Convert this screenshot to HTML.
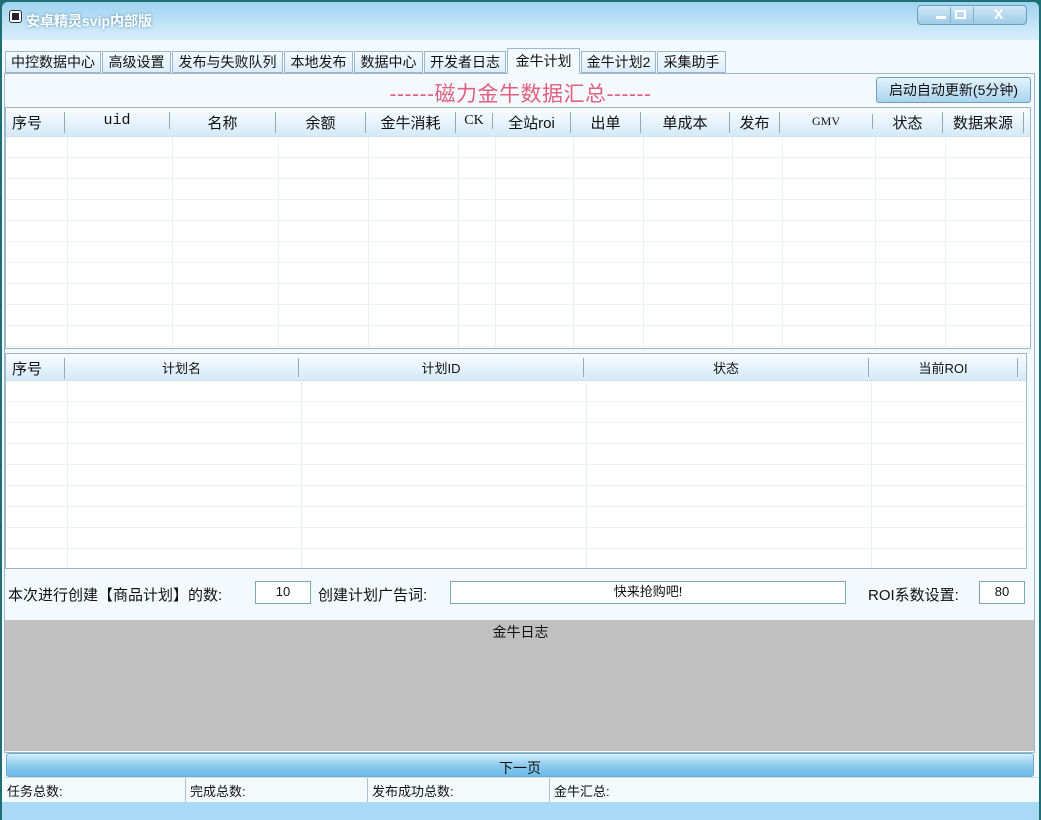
<!DOCTYPE html>
<html><head><meta charset="utf-8"><style>
*{margin:0;padding:0;box-sizing:border-box}
body{width:1041px;height:820px;overflow:hidden;background:#1d6f74;font-family:"Liberation Sans","Noto Sans CJK SC",sans-serif;font-size:14px;color:#111;position:relative}
.a{position:absolute}
#win{left:2px;top:2px;width:1037px;height:818px;background:#eaf4fb;border-radius:6px 6px 0 0;overflow:hidden}
#title{left:0;top:0;width:1037px;height:38px;background:linear-gradient(#9fd2f0,#c3e4f7 60%,#d6eefb)}
#body{left:0;top:38px;width:1037px;height:780px;background:#f3f9fd}
.tab{position:absolute;top:49px;height:22px;border:1px solid #9bb8cc;background:linear-gradient(#f4fbff,#dcedf8);font-size:14px;line-height:20px;text-align:center}
.tbl{position:absolute;background:#fff;border:1px solid #9db6c8;overflow:hidden}
.hd{position:absolute;left:0;top:0;right:0;background:linear-gradient(#fafdff,#d4e9f7);border-bottom:1px solid #cfe0ec}
.hc{position:absolute;top:0;text-align:center;border-right:1px solid #9aa;font-size:15px}
.rows{position:absolute;left:0;right:0;background:repeating-linear-gradient(#fff 0,#fff 20px,#eef2f4 20px,#eef2f4 21px)}
.vl{position:absolute;width:1px;background:#eceff1}
.inp{position:absolute;background:#fff;border:1px solid #7ea4bd;text-align:center;font-size:13px;line-height:20px}
</style></head><body>
<div id="win" class="a">
<div id="title" class="a"></div>
<div class="a" style="left:8px;top:9px;width:11px;height:11px;background:#223;border-radius:2px;border:2px solid #fff;box-shadow:0 0 0 1px #333"></div>
<div class="a" style="left:24px;top:9px;color:#fff;font-size:14px;font-weight:bold;text-shadow:0 0 3px #5a8fb0">安卓精灵svip内部版</div>
<div class="a" style="left:915px;top:3px;width:110px;height:20px;border:1px solid #6a9fbf;border-radius:4px;background:linear-gradient(#cfe8f7,#9ecbe6)"></div>
<div class="a" style="left:934px;top:14px;width:10px;height:3px;background:#fff"></div>
<div class="a" style="left:948px;top:5px;width:1px;height:16px;background:#7fb0cf"></div>
<div class="a" style="left:953px;top:8px;width:11px;height:9px;border:2px solid #fff"></div>
<div class="a" style="left:971px;top:5px;width:1px;height:16px;background:#7fb0cf"></div>
<div class="a" style="left:992px;top:4px;color:#fff;font-weight:bold;font-size:14px">X</div>
<div id="body" class="a"></div>

<div class="tab" style="left:3px;width:96px">中控数据中心</div>
<div class="tab" style="left:100px;width:69px">高级设置</div>
<div class="tab" style="left:170px;width:111px">发布与失败队列</div>
<div class="tab" style="left:282px;width:69px">本地发布</div>
<div class="tab" style="left:352px;width:69px">数据中心</div>
<div class="tab" style="left:422px;width:82px">开发者日志</div>
<div class="tab" style="left:505px;width:73px;top:46px;height:26px;background:#f3f9fd;border-bottom:none;line-height:24px">金牛计划</div>
<div class="tab" style="left:579px;width:75px">金牛计划2</div>
<div class="tab" style="left:655px;width:69px">采集助手</div>
<div class="a" style="left:2px;top:71px;width:1031px;height:680px;border:1px solid #9bb8cc"></div>
<div class="a" style="left:506px;top:70px;width:71px;height:3px;background:#f3f9fd"></div>

<div class="a" style="left:0;top:76px;width:1037px;text-align:center;color:#e0607e;font-size:21px;letter-spacing:0.5px">------磁力金牛数据汇总------</div>
<div class="a" style="left:874px;top:75px;width:155px;height:26px;border:1px solid #6f9fbe;border-radius:3px;background:linear-gradient(#e4f3fc,#a9d3ee);text-align:center;line-height:24px;font-size:14px">启动自动更新(5分钟)</div>

<div class="tbl" style="left:3px;top:105px;width:1026px;height:242px">
 <div class="rows" style="top:29px;bottom:0"></div>
 <div class="hd" style="height:29px"></div>
 <div class="hc" style="left:0;width:59px;top:4px;text-align:left;padding-left:6px">序号</div>
 <div class="hc" style="left:59px;width:105px;top:4px;font-family:'Liberation Mono',monospace">uid</div>
 <div class="hc" style="left:164px;width:106px;top:4px">名称</div>
 <div class="hc" style="left:270px;width:90px;top:4px">余额</div>
 <div class="hc" style="left:360px;width:90px;top:4px">金牛消耗</div>
 <div class="hc" style="left:450px;width:37px;top:5px;font-size:14px;font-family:'Liberation Serif',serif">CK</div>
 <div class="hc" style="left:487px;width:78px;top:4px">全站roi</div>
 <div class="hc" style="left:565px;width:70px;top:4px">出单</div>
 <div class="hc" style="left:635px;width:89px;top:4px">单成本</div>
 <div class="hc" style="left:724px;width:50px;top:4px">发布</div>
 <div class="hc" style="left:774px;width:93px;top:6px;font-size:12px;font-family:'Liberation Serif',serif">GMV</div>
 <div class="hc" style="left:867px;width:70px;top:4px">状态</div>
 <div class="hc" style="left:937px;width:81px;top:4px">数据来源</div>
 <div class="vl" style="left:61px;top:29px;bottom:0"></div><div class="vl" style="left:166px;top:29px;bottom:0"></div><div class="vl" style="left:272px;top:29px;bottom:0"></div><div class="vl" style="left:362px;top:29px;bottom:0"></div><div class="vl" style="left:452px;top:29px;bottom:0"></div><div class="vl" style="left:489px;top:29px;bottom:0"></div><div class="vl" style="left:567px;top:29px;bottom:0"></div><div class="vl" style="left:637px;top:29px;bottom:0"></div><div class="vl" style="left:726px;top:29px;bottom:0"></div><div class="vl" style="left:776px;top:29px;bottom:0"></div><div class="vl" style="left:869px;top:29px;bottom:0"></div><div class="vl" style="left:939px;top:29px;bottom:0"></div>
</div>

<div class="tbl" style="left:3px;top:351px;width:1022px;height:216px">
 <div class="rows" style="top:27px;bottom:0"></div>
 <div class="hd" style="height:27px"></div>
 <div class="hc" style="left:0;width:59px;top:4px;text-align:left;padding-left:6px">序号</div>
 <div class="hc" style="left:59px;width:234px;top:4px;font-size:13px">计划名</div>
 <div class="hc" style="left:293px;width:285px;top:4px;font-size:13px">计划ID</div>
 <div class="hc" style="left:578px;width:285px;top:4px;font-size:13px">状态</div>
 <div class="hc" style="left:863px;width:149px;top:4px;font-size:13px">当前ROI</div>
 <div class="vl" style="left:61px;top:27px;bottom:0"></div><div class="vl" style="left:295px;top:27px;bottom:0"></div><div class="vl" style="left:580px;top:27px;bottom:0"></div><div class="vl" style="left:865px;top:27px;bottom:0"></div>
</div>

<div class="a" style="left:6px;top:582px;font-size:15px">本次进行创建【商品计划】的数:</div>
<div class="inp" style="left:253px;top:579px;width:56px;height:23px">10</div>
<div class="a" style="left:316px;top:582px;font-size:15px">创建计划广告词:</div>
<div class="inp" style="left:448px;top:579px;width:396px;height:23px">快来抢购吧!</div>
<div class="a" style="left:866px;top:582px;font-size:15px">ROI系数设置:</div>
<div class="inp" style="left:977px;top:579px;width:46px;height:23px">80</div>

<div class="a" style="left:3px;top:618px;width:1029px;height:131px;background:#c0c0c0"></div>
<div class="a" style="left:0;top:620px;width:1037px;text-align:center;font-size:14px">金牛日志</div>

<div class="a" style="left:4px;top:751px;width:1028px;height:24px;border:1px solid #6fa9cf;border-radius:3px;background:linear-gradient(#d6effc,#8fccef 50%,#6bbbe8);text-align:center;line-height:28px;font-size:14px">下一页</div>

<div class="a" style="left:2px;top:775px;width:1035px;height:25px;background:#f4f9fc;border-top:1px solid #cfdfe9"></div>
<div class="a" style="left:183px;top:776px;width:1px;height:24px;background:#a9c3d4"></div>
<div class="a" style="left:365px;top:776px;width:1px;height:24px;background:#a9c3d4"></div>
<div class="a" style="left:547px;top:776px;width:1px;height:24px;background:#a9c3d4"></div>
<div class="a" style="left:5px;top:779px;font-size:13px">任务总数:</div>
<div class="a" style="left:188px;top:779px;font-size:13px">完成总数:</div>
<div class="a" style="left:370px;top:779px;font-size:13px">发布成功总数:</div>
<div class="a" style="left:552px;top:779px;font-size:13px">金牛汇总:</div>
<div class="a" style="left:0;top:800px;width:1037px;height:20px;background:#a8d9f5"></div>
</div>
</body></html>
